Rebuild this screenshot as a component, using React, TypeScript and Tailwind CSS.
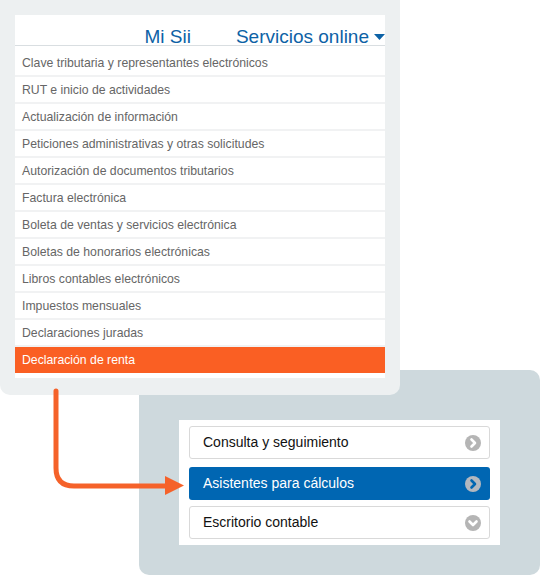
const items = [
  'Clave tributaria y representantes electrónicos',
  'RUT e inicio de actividades',
  'Actualización de información',
  'Peticiones administrativas y otras solicitudes',
  'Autorización de documentos tributarios',
  'Factura electrónica',
  'Boleta de ventas y servicios electrónica',
  'Boletas de honorarios electrónicas',
  'Libros contables electrónicos',
  'Impuestos mensuales',
  'Declaraciones juradas',
];

function CircleChevron({ dir, cut, fill }: { dir: 'right' | 'down'; cut: string; fill: string }) {
  return (
    <svg width="16" height="16" viewBox="0 0 16 16">
      <circle cx="8" cy="8" r="8" fill={fill} />
      <path
        d={dir === 'right' ? 'M6.5 4.5 L10 8 L6.5 11.5' : 'M4.5 6.5 L8 10 L11.5 6.5'}
        fill="none"
        stroke={cut}
        strokeWidth="2.6"
        strokeLinecap="round"
        strokeLinejoin="round"
      />
    </svg>
  );
}

export default function App() {
  return (
    <div className="relative w-[540px] h-[577px] bg-white overflow-hidden font-['Liberation_Sans',Arial,sans-serif]">
      {/* top panel: Mi Sii menu */}
      <div className="relative z-10 w-[400px] bg-[#edf0f1] px-[15px] pt-[15px] pb-[17px] rounded-b-[10px]">
        <div className="bg-white pb-[5px]">
          <div className="h-[31px] flex items-end justify-end gap-[45px] border-b border-[#d9dee1] text-[#0d62a6] text-[19px] leading-[17px]">
            <span>Mi Sii</span>
            <span className="flex items-center">
              Servicios online
              <svg width="11" height="6" viewBox="0 0 11 6" className="ml-[5px] mt-[1px]">
                <path d="M0 0 H11 L5.5 6 Z" fill="#0d62a6" />
              </svg>
            </span>
          </div>
          <ul className="pt-[4px]">
            {items.map((t) => (
              <li
                key={t}
                className="h-[27px] border-b-2 border-[#f1f2f3] pl-[7px] pt-[2px] flex items-center text-[12.25px] text-[#666]"
              >
                {t}
              </li>
            ))}
            <li className="h-[26px] bg-[#fa5f23] pl-[7px] pt-[1px] flex items-center text-[12.25px] text-white">
              Declaración de renta
            </li>
          </ul>
        </div>
      </div>

      {/* bottom panel: renta options */}
      <div className="-mt-[25px] ml-[139px] w-[401px] h-[205px] bg-[#ced9dd] rounded-[10px] pt-[50px] pl-[40px]">
        <div className="w-[321px] h-[125px] bg-white px-[10px] pt-[6px] text-[14px]">
          <div className="h-[33px] border border-[#d9d9d9] rounded-[3px] flex items-center justify-between pl-[13px] pr-[8px] text-[#111]">
            <span>Consulta y seguimiento</span>
            <CircleChevron dir="right" cut="#ffffff" fill="#b5b5b5" />
          </div>
          <div className="mt-[8px] h-[33px] bg-[#0066b2] rounded-[3px] flex items-center justify-between pl-[14px] pr-[9px] text-white">
            <span>Asistentes para cálculos</span>
            <CircleChevron dir="right" cut="#0066b2" fill="#b3b8bf" />
          </div>
          <div className="mt-[6px] h-[33px] border border-[#d9d9d9] rounded-[3px] flex items-center justify-between pl-[13px] pr-[8px] text-[#111]">
            <span>Escritorio contable</span>
            <CircleChevron dir="down" cut="#ffffff" fill="#b5b5b5" />
          </div>
        </div>
      </div>

      {/* connecting arrow */}
      <svg className="absolute left-0 top-0 z-20 pointer-events-none" width="540" height="577" viewBox="0 0 540 577">
        <path
          d="M56 391 V468 Q56 486 74 486 H168"
          fill="none"
          stroke="#f5622a"
          strokeWidth="5"
          strokeLinecap="round"
        />
        <path d="M165 476 L184 485.5 L165 495 Z" fill="#f5622a" />
      </svg>
    </div>
  );
}
